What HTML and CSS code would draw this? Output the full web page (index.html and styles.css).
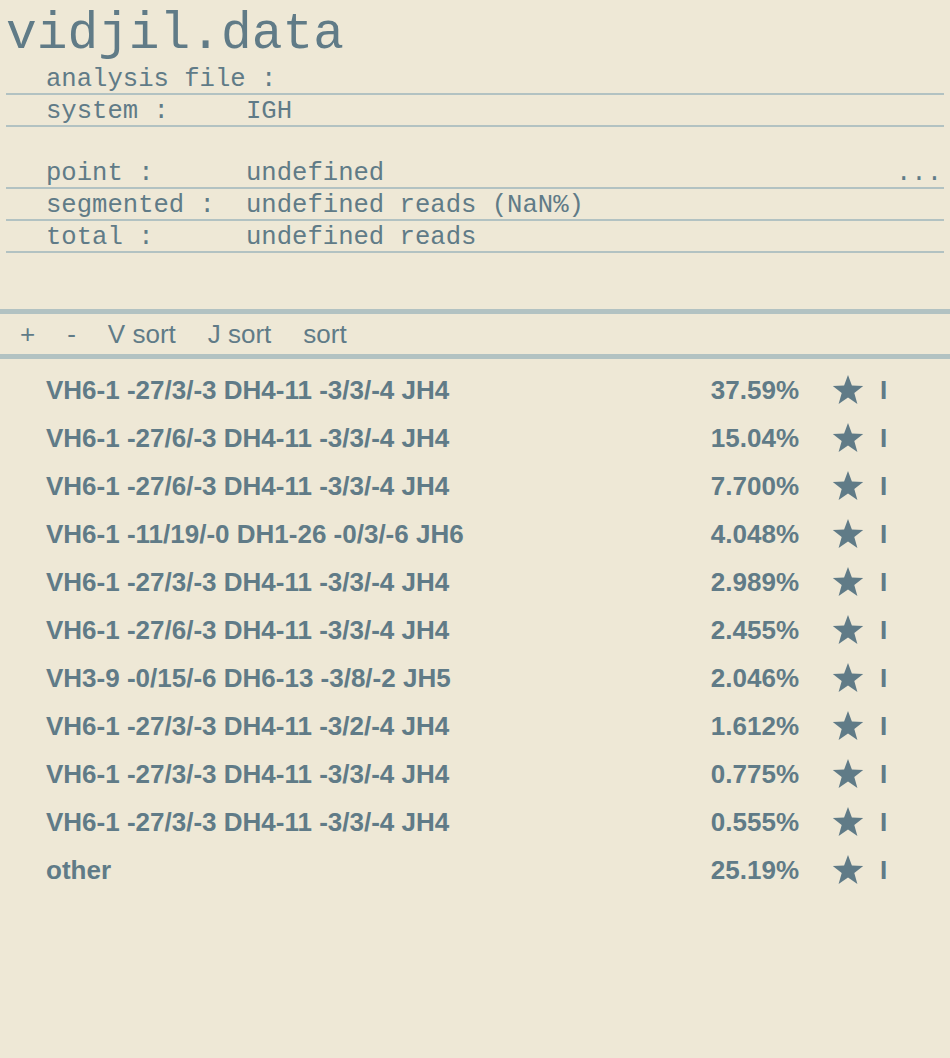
FILE: index.html
```html
<!DOCTYPE html>
<html>
<head>
<meta charset="utf-8">
<link rel="stylesheet" href="styles.css">
</head>
<body>
<div class="page">
  <div class="title">vidjil.data</div>
  <div class="info">
    <div class="row line"><span class="key">analysis file :</span><span class="val"></span></div>
    <div class="row line"><span class="key">system :</span><span class="val">IGH</span></div>
    <div class="row blank"></div>
    <div class="row line"><span class="key">point :</span><span class="val">undefined</span><span class="more">...</span></div>
    <div class="row line"><span class="key">segmented :</span><span class="val">undefined reads (NaN%)</span></div>
    <div class="row line"><span class="key">total :</span><span class="val">undefined reads</span></div>
  </div>
  <div class="toolbar">
    <span class="tool">+</span>
    <span class="tool">-</span>
    <span class="tool">V sort</span>
    <span class="tool">J sort</span>
    <span class="tool">sort</span>
  </div>
  <div class="list" id="list"></div>
</div>
<script>
var rows = [
  ["VH6-1 -27/3/-3 DH4-11 -3/3/-4 JH4","37.59%"],
  ["VH6-1 -27/6/-3 DH4-11 -3/3/-4 JH4","15.04%"],
  ["VH6-1 -27/6/-3 DH4-11 -3/3/-4 JH4","7.700%"],
  ["VH6-1 -11/19/-0 DH1-26 -0/3/-6 JH6","4.048%"],
  ["VH6-1 -27/3/-3 DH4-11 -3/3/-4 JH4","2.989%"],
  ["VH6-1 -27/6/-3 DH4-11 -3/3/-4 JH4","2.455%"],
  ["VH3-9 -0/15/-6 DH6-13 -3/8/-2 JH5","2.046%"],
  ["VH6-1 -27/3/-3 DH4-11 -3/2/-4 JH4","1.612%"],
  ["VH6-1 -27/3/-3 DH4-11 -3/3/-4 JH4","0.775%"],
  ["VH6-1 -27/3/-3 DH4-11 -3/3/-4 JH4","0.555%"],
  ["other","25.19%"]
];
var star = '<svg class="star" viewBox="0 0 32 32" width="32" height="32"><polygon points="16,1 19.9,11.6 31.2,12 22.3,19 25.4,29.9 16,23.6 6.6,29.9 9.7,19 0.8,12 12.1,11.6" fill="currentColor"/></svg>';
var html = "";
rows.forEach(function(r){
  html += '<div class="clone"><span class="name">'+r[0]+'</span><span class="pct">'+r[1]+'</span><span class="fav">'+star+'</span><span class="bar">I</span></div>';
});
document.getElementById("list").innerHTML = html;
</script>
</body>
</html>
```
FILE: styles.css
```css
html, body {
  margin: 0;
  padding: 0;
  background: #eee8d6;
}
body {
  color: #607b87;
  font-family: "Liberation Sans", Arial, sans-serif;
}
.page {
  width: 950px;
  min-height: 1058px;
}
.title {
  font-family: "Liberation Mono", "Courier New", monospace;
  font-size: 51.2px;
  line-height: 58px;
  padding: 5px 0 0 6px;
  box-sizing: border-box;
  height: 63px;
}
.info {
  margin: 0 6px;
  font-family: "Liberation Mono", "Courier New", monospace;
  font-size: 25.6px;
}
.row {
  display: flex;
  height: 32px;
  line-height: 34px;
  box-sizing: border-box;
}
.row.line {
  border-bottom: 2px solid #b2c2c2;
}
.row.blank {
  height: 30px;
}
.key {
  width: 200px;
  padding-left: 40px;
  white-space: pre;
  flex: none;
}
.val {
  flex: 1;
  white-space: pre;
}
.more {
  padding-right: 2px;
}
.toolbar {
  margin-top: 56px;
  border-top: 5px solid #b2c2c2;
  border-bottom: 5px solid #b2c2c2;
  height: 50px;
  box-sizing: border-box;
  display: flex;
  align-items: center;
  gap: 32px;
  padding-left: 20px;
  font-size: 26px;
}
.list {
  padding-top: 7px;
}
.clone {
  display: flex;
  align-items: center;
  height: 48px;
  font-weight: bold;
  font-size: 26px;
}
.name {
  padding-left: 46px;
  flex: 1;
}
.pct {
  width: 200px;
  text-align: right;
}
.fav {
  width: 32px;
  height: 32px;
  margin-left: 33px;
  display: flex;
}
.star {
  display: block;
}
.bar {
  margin-left: 16px;
  width: 70px;
}
```
